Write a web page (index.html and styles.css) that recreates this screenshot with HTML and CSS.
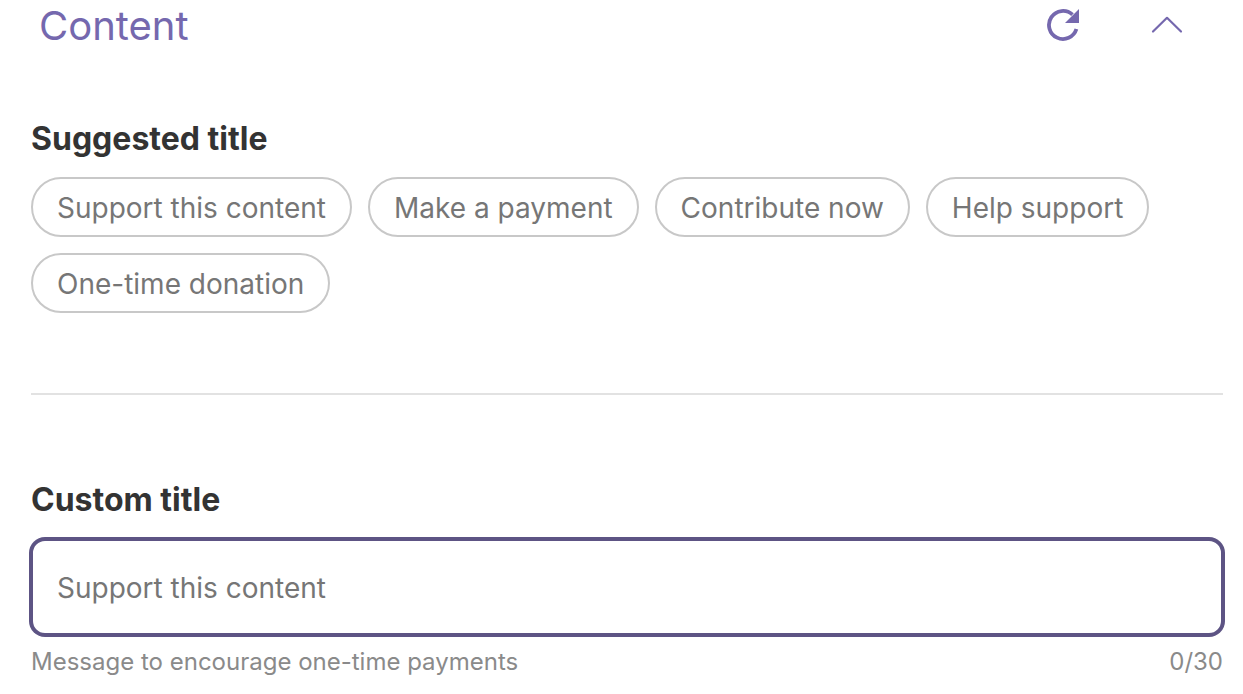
FILE: index.html
```html
<!DOCTYPE html>
<html lang="en">
<head>
    <meta charset="UTF-8">
    <meta name="viewport" content="width=device-width, initial-scale=1.0">
    <title>Content</title>
    <link rel="stylesheet" href="styles.css">
</head>
<body>
    <div class="container">
        <div class="panel-header">
            <h1>Content</h1>
            <div class="panel-actions">
                <button class="icon-button refresh" aria-label="Refresh">
                    <svg width="34" height="34" viewBox="0 0 34 34">
                        <path d="M30.4 21A14 14 0 1 1 26.5 6.7" fill="none" stroke="#7568ae" stroke-width="3.8"/>
                        <path d="M33 1V15H19Z" fill="#7568ae"/>
                    </svg>
                </button>
                <button class="icon-button collapse" aria-label="Collapse">
                    <svg width="34" height="18" viewBox="0 0 34 18">
                        <path d="M3 15.5L17 1.8L31 15.5" fill="none" stroke="#7568ae" stroke-width="2.2" stroke-linecap="round" stroke-linejoin="round"/>
                    </svg>
                </button>
            </div>
        </div>

        <section class="suggested">
            <h2>Suggested title</h2>
            <div class="chips">
                <button class="chip">Support this content</button>
                <button class="chip">Make a payment</button>
                <button class="chip">Contribute now</button>
                <button class="chip">Help support</button>
                <button class="chip">One-time donation</button>
            </div>
        </section>

        <hr class="divider">

        <section class="custom">
            <h2>Custom title</h2>
            <input type="text" class="title-input" placeholder="Support this content">
            <div class="field-hint">
                <span>Message to encourage one-time payments</span>
                <span>0/30</span>
            </div>
        </section>
    </div>
</body>
</html>
```

FILE: styles.css
```css
body {
    font-family: Inter, "Liberation Sans", sans-serif;
    background-color: #fff;
    margin: 0;
    padding: 0;
}
.container {
    padding: 0 20px 0 31px;
}
.panel-header {
    display: flex;
    justify-content: space-between;
    align-items: center;
    height: 50px;
    padding-left: 8px;
}
h1 {
    margin: 0;
    font-size: 40px;
    font-weight: 400;
    color: #7568ae;
}
.panel-actions {
    display: flex;
    align-items: center;
    gap: 70px;
    padding-right: 39px;
}
.icon-button {
    display: flex;
    padding: 0;
    border: none;
    background: none;
    cursor: pointer;
}
h2 {
    margin: 0;
    font-size: 32px;
    line-height: 36px;
    font-weight: 700;
    color: #333;
}
.suggested {
    padding-top: 71px;
}
.chips {
    display: flex;
    flex-wrap: wrap;
    gap: 16px;
    margin-top: 20px;
    width: 1150px;
}
.chip {
    height: 60px;
    padding: 2px 24px 0;
    font-family: inherit;
    font-size: 28px;
    color: #767676;
    background: #fff;
    border: 2px solid #c8c8c8;
    border-radius: 30px;
    cursor: pointer;
}
.divider {
    height: 2px;
    margin: 80px 0 0;
    border: none;
    background-color: #e2e2e2;
}
.custom {
    padding-top: 87px;
}
.title-input {
    display: block;
    box-sizing: border-box;
    width: 100%;
    height: 96px;
    margin-top: 21px;
    padding: 2px 24px 0;
    font-family: inherit;
    font-size: 28px;
    background: #fff;
    border: 2px solid #5d5484;
    border-radius: 14px;
    box-shadow: 0 0 0 2px #5d5484;
    outline: none;
}
.title-input::placeholder {
    color: #767676;
    opacity: 1;
}
.field-hint {
    display: flex;
    justify-content: space-between;
    margin-top: 12px;
    font-size: 24px;
    color: #8a8a8a;
}
```
